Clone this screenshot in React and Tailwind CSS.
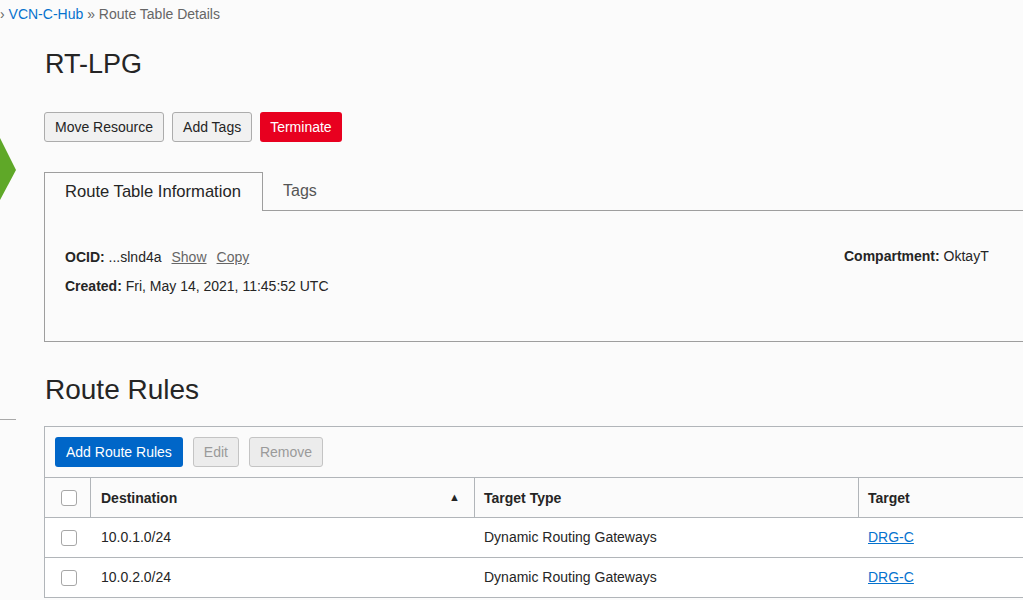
// App.jsx
import React from "react";

const rules = [
  { dest: "10.0.1.0/24", type: "Dynamic Routing Gateways", target: "DRG-C" },
  { dest: "10.0.2.0/24", type: "Dynamic Routing Gateways", target: "DRG-C" },
];

const Checkbox = () => (
  <span className="block w-4 h-4 rounded-[3px] border border-[#a7a7a7] bg-white" />
);

const App = () => {
  return (
    <div
      className="w-[1023px] h-[600px] overflow-hidden flex bg-[#fbfbfb] text-[#252525]"
      style={{ fontFamily: '"Liberation Sans", Arial, sans-serif' }}
    >
      {/* Barra lateral recortada */}
      <div className="w-4 shrink-0 flex flex-col">
        <div className="h-[138px]" />
        <svg width="16" height="62" viewBox="0 0 16 62" className="block">
          <polygon points="0,0 0,62 16,32" fill="#5fa828" />
        </svg>
        <div className="h-[219px]" />
        <div className="h-px bg-[#a9a9a9]" />
      </div>

      {/* Contenido */}
      <div className="flex-1 min-w-0">
        {/* Migas de pan */}
        <div className="-ml-4 pt-[4px] h-6 text-sm leading-5 text-[#555] whitespace-nowrap">
          <span className="text-[#666]">›</span>{" "}
          <span className="text-[#0572ce]">VCN-C-Hub</span>{" "}
          <span className="text-[#666]">» Route Table Details</span>
        </div>

        <div className="pl-[28px] w-[1100px]">
          <h1 className="mt-[20px] h-10 leading-10 text-[27px] pl-px">RT-LPG</h1>

          {/* Acciones */}
          <div className="mt-[28px] flex gap-2">
            <button className="h-[30px] px-[10px] text-sm bg-[#f1f1f1] border border-[#acacac] rounded-[3px] text-[#252525]">
              Move Resource
            </button>
            <button className="h-[30px] px-[10px] text-sm bg-[#f1f1f1] border border-[#acacac] rounded-[3px] text-[#252525]">
              Add Tags
            </button>
            <button className="h-[30px] px-[10px] text-sm bg-[#e8001f] rounded-[3px] text-white">
              Terminate
            </button>
          </div>

          {/* Pestañas */}
          <div className="mt-[30px] flex">
            <div className="h-[39px] w-[219px] border border-b-0 border-[#9e9e9e] bg-[#fbfbfb] flex items-center pl-5 text-[16.6px] pt-px">
              Route Table Information
            </div>
            <div className="flex-1 border-b border-[#9e9e9e] flex items-center pl-5 text-base text-[#555]">
              Tags
            </div>
          </div>
          <div className="border border-t-0 border-[#9e9e9e] h-[131px] pt-[36px] pl-5 text-sm flex">
            <div className="w-[779px] flex flex-col gap-[9px]">
              <div className="leading-5">
                <span className="font-bold">OCID:</span> ...slnd4a
                <span className="ml-[10px] underline text-[#666]">Show</span>
                <span className="ml-[10px] underline text-[#666]">Copy</span>
              </div>
              <div className="leading-5">
                <span className="font-bold">Created:</span> Fri, May 14, 2021, 11:45:52 UTC
              </div>
            </div>
            <div className="leading-5 -mt-px">
              <span className="font-bold">Compartment:</span> OktayT
            </div>
          </div>

          <h2 className="mt-[28px] h-10 leading-10 text-[28px] pl-px">Route Rules</h2>

          {/* Tabla */}
          <div className="mt-4 border border-[#b1b5b9] bg-white">
            <div className="p-[10px] flex gap-[10px] bg-[#fbfbfb]">
              <button className="h-[30px] px-[11px] text-sm bg-[#0066c8] rounded-[3px] text-white">
                Add Route Rules
              </button>
              <button className="h-[30px] px-[10px] text-sm bg-[#ececec] border border-[#c4c4c4] rounded-[3px] text-[#9a9a9a]">
                Edit
              </button>
              <button className="h-[30px] px-[10px] text-sm bg-[#ececec] border border-[#c4c4c4] rounded-[3px] text-[#9a9a9a]">
                Remove
              </button>
            </div>
            <div className="flex h-10 border-t border-[#b1b5b9] text-sm font-bold bg-[#fbfbfb]">
              <div className="w-[46px] flex items-center pl-4 border-r border-[#b1b5b9]">
                <Checkbox />
              </div>
              <div className="w-[384px] flex items-center justify-between pl-[10px] pr-[14px] border-r border-[#b1b5b9]">
                <span>Destination</span>
                <span className="text-[11px]">▲</span>
              </div>
              <div className="w-[384px] flex items-center pl-[9px] border-r border-[#b1b5b9]">
                Target Type
              </div>
              <div className="flex-1 flex items-center pl-[9px]">Target</div>
            </div>
            {rules.map((r) => (
              <div key={r.dest} className="flex h-10 border-t border-[#b1b5b9] text-sm">
                <div className="w-[46px] flex items-center pl-4">
                  <Checkbox />
                </div>
                <div className="w-[384px] flex items-center pl-[10px] -mt-px">{r.dest}</div>
                <div className="w-[384px] flex items-center pl-[9px] -mt-px">{r.type}</div>
                <div className="flex-1 flex items-center pl-[9px] -mt-px">
                  <span className="text-[#0572ce] underline">{r.target}</span>
                </div>
              </div>
            ))}
          </div>
        </div>
      </div>
    </div>
  );
};

export default App;
